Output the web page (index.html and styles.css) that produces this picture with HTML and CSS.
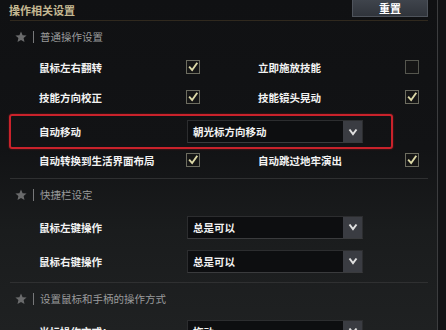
FILE: index.html
```html
<!DOCTYPE html>
<html lang="zh-CN">
<head>
    <meta charset="UTF-8">
    <meta name="viewport" content="width=device-width, initial-scale=1.0">
    <title>操作相关设置</title>
    <link rel="stylesheet" href="styles.css">
</head>
<body>
    <div class="panel">
        <div class="header">
            <span class="title">操作相关设置</span>
            <button class="reset-button">重置</button>
        </div>

        <div class="section first">
            <div class="section-head">
                <svg class="star" viewBox="0 0 12 12"><polygon points="6,0.5 7.6,4.2 11.6,4.5 8.6,7.1 9.5,11 6,8.9 2.5,11 3.4,7.1 0.4,4.5 4.4,4.2"/></svg>
                <span class="bar"></span>
                <span class="section-title">普通操作设置</span>
            </div>
            <div class="row">
                <span class="label">鼠标左右翻转</span>
                <span class="check on"><svg viewBox="0 0 14 14"><polyline points="2.5,6.5 6,10.5 12,2"/></svg></span>
                <span class="label">立即施放技能</span>
                <span class="check"></span>
            </div>
            <div class="row">
                <span class="label">技能方向校正</span>
                <span class="check on"><svg viewBox="0 0 14 14"><polyline points="2.5,6.5 6,10.5 12,2"/></svg></span>
                <span class="label">技能镜头晃动</span>
                <span class="check on"><svg viewBox="0 0 14 14"><polyline points="2.5,6.5 6,10.5 12,2"/></svg></span>
            </div>
            <div class="row highlight">
                <span class="label">自动移动</span>
                <div class="select">
                    <span class="select-text">朝光标方向移动</span>
                    <span class="select-arrow"><svg viewBox="0 0 10 8"><polyline points="1.5,1.5 5,6 8.5,1.5"/></svg></span>
                </div>
            </div>
            <div class="row short">
                <span class="label">自动转换到生活界面布局</span>
                <span class="check on"><svg viewBox="0 0 14 14"><polyline points="2.5,6.5 6,10.5 12,2"/></svg></span>
                <span class="label">自动跳过地牢演出</span>
                <span class="check on"><svg viewBox="0 0 14 14"><polyline points="2.5,6.5 6,10.5 12,2"/></svg></span>
            </div>
        </div>

        <div class="section second">
            <div class="section-head">
                <svg class="star" viewBox="0 0 12 12"><polygon points="6,0.5 7.6,4.2 11.6,4.5 8.6,7.1 9.5,11 6,8.9 2.5,11 3.4,7.1 0.4,4.5 4.4,4.2"/></svg>
                <span class="bar"></span>
                <span class="section-title">快捷栏设定</span>
            </div>
            <div class="row tall">
                <span class="label">鼠标左键操作</span>
                <div class="select">
                    <span class="select-text">总是可以</span>
                    <span class="select-arrow"><svg viewBox="0 0 10 8"><polyline points="1.5,1.5 5,6 8.5,1.5"/></svg></span>
                </div>
            </div>
            <div class="row tall">
                <span class="label">鼠标右键操作</span>
                <div class="select">
                    <span class="select-text">总是可以</span>
                    <span class="select-arrow"><svg viewBox="0 0 10 8"><polyline points="1.5,1.5 5,6 8.5,1.5"/></svg></span>
                </div>
            </div>
        </div>

        <div class="section third">
            <div class="section-head">
                <svg class="star" viewBox="0 0 12 12"><polygon points="6,0.5 7.6,4.2 11.6,4.5 8.6,7.1 9.5,11 6,8.9 2.5,11 3.4,7.1 0.4,4.5 4.4,4.2"/></svg>
                <span class="bar"></span>
                <span class="section-title">设置鼠标和手柄的操作方式</span>
            </div>
            <div class="row tall">
                <span class="label">光标操作方式：</span>
                <div class="select">
                    <span class="select-text">拖动</span>
                    <span class="select-arrow"><svg viewBox="0 0 10 8"><polyline points="1.5,1.5 5,6 8.5,1.5"/></svg></span>
                </div>
            </div>
        </div>
    </div>
</body>
</html>
```

FILE: styles.css
```css
html, body {
    margin: 0;
    height: 100%;
}
body {
    width: 446px;
    height: 330px;
    overflow: hidden;
    background: #121315;
    font-family: "Noto Sans CJK SC", "Noto Sans", sans-serif;
}
.panel {
    box-sizing: border-box;
    width: 438px;
    height: 330px;
    padding: 0 9px 0 10px;
    border-right: 1px solid #3c3d3f;
    background: linear-gradient(180deg, #101113 0%, #121315 45%, #1a1c1d 70%, #1f2122 100%);
}
.header {
    display: flex;
    justify-content: space-between;
    align-items: flex-start;
    height: 20px;
    border-bottom: 1px solid #30291e;
}
.title {
    margin: 4px 0 0 -1px;
    font-size: 11px;
    line-height: 12px;
    font-weight: 700;
    color: #c4b892;
}
.reset-button {
    width: 76px;
    height: 17px;
    padding: 0;
    border: 1px solid #4f545c;
    border-top: none;
    background: linear-gradient(180deg, #3f444c, #30343b);
    color: #fff;
    font-family: inherit;
    font-size: 11px;
    font-weight: 700;
    line-height: 15px;
}
.section {
    border-top: 1px solid #2f3031;
}
.section.first {
    border-top: none;
    padding-bottom: 7px;
}
.section.second {
    padding-bottom: 4px;
}
.section-head {
    display: flex;
    align-items: center;
    height: 31px;
    padding-left: 5px;
}
.star {
    width: 12px;
    height: 12px;
    fill: #6a6b6c;
}
.bar {
    width: 1px;
    height: 12px;
    margin: 0 6px 0 6px;
    background: #77787a;
}
.section-title {
    font-size: 10.5px;
    color: #9a9b9c;
}
.row {
    display: grid;
    grid-template-columns: 147px 72px 147px 14px;
    align-items: center;
    height: 30px;
    padding-left: 29px;
}
.row.short {
    height: 22px;
}
.row.tall {
    height: 34px;
    grid-template-columns: 148px 176px;
}
.row.highlight {
    box-sizing: border-box;
    height: 35px;
    width: 384px;
    margin: 2px 0 0 -1px;
    padding-left: 28px;
    grid-template-columns: 148px 176px;
    border: 2px solid #c9222b;
    border-radius: 3px;
    box-shadow: 0 0 2px rgba(200, 30, 30, 0.6);
}
.label {
    font-size: 10.5px;
    font-weight: 700;
    color: #f2f2f2;
    white-space: nowrap;
}
.check {
    box-sizing: border-box;
    width: 14px;
    height: 14px;
    border: 1px solid #55564e;
    background: #151515;
}
.check.on {
    border-color: #6d6d60;
}
.check svg {
    display: block;
    width: 12px;
    height: 12px;
    fill: none;
    stroke: #dcd8a6;
    stroke-width: 2.2;
}
.select {
    box-sizing: border-box;
    display: flex;
    align-items: stretch;
    width: 176px;
    height: 23px;
    border: 1px solid #2c2d2f;
    border-bottom-color: #3a3b3d;
    background: #0d0e10;
}
.select-text {
    flex: 1;
    padding-left: 5px;
    font-size: 10.5px;
    font-weight: 700;
    line-height: 21px;
    color: #f2f2f2;
}
.select-arrow {
    display: flex;
    align-items: center;
    justify-content: center;
    width: 19px;
    background: #3a3c42;
}
.select-arrow svg {
    width: 10px;
    height: 8px;
    fill: none;
    stroke: #e0e0e0;
    stroke-width: 2;
}
```
